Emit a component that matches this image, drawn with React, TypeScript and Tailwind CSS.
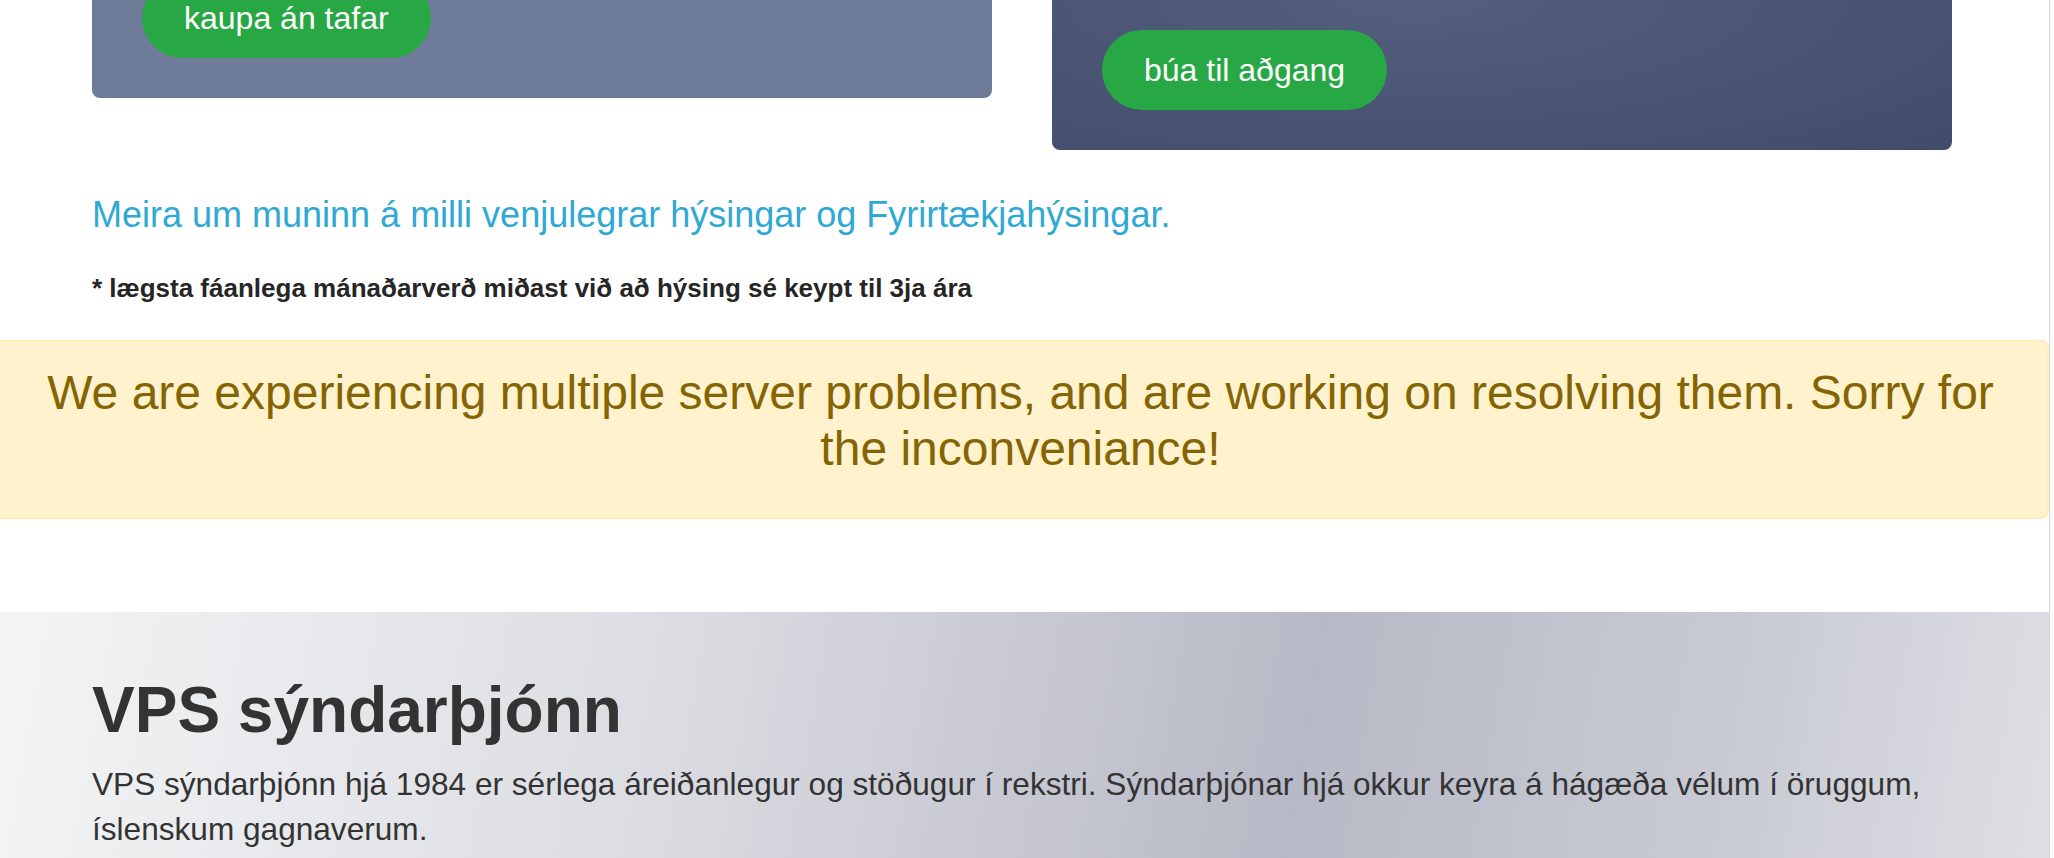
const font = "font-['Liberation_Sans',Arial,sans-serif]";

function GreenButton({ text, className = "" }: { text: string; className?: string }) {
  return (
    <button
      className={`flex h-[80px] items-center rounded-full bg-[#28a745] px-[42px] text-[32px] text-white ${className}`}
    >
      {text}
    </button>
  );
}

export default function App() {
  return (
    <div className={`flex min-h-[858px] w-full overflow-hidden bg-white ${font}`}>
      <main className="flex-1 overflow-hidden">
        <div className="ml-[92px] w-[1860px]">
          <div className="grid grid-cols-2 items-start gap-[60px]">
            <div className="rounded-b-lg bg-[#6f7c99] pb-[40px] pl-[50px]">
              <GreenButton text="kaupa án tafar" className="-mt-[22px]" />
            </div>
            <div className="rounded-b-lg bg-[radial-gradient(ellipse_at_40%_0%,#545f7e,#414c6b)] pb-[40px] pl-[50px] pt-[30px]">
              <GreenButton text="búa til aðgang" />
            </div>
          </div>

          <a href="#" className="mt-[38px] block text-[36px] leading-[54px] text-[#2fa9d4]">
            Meira um muninn á milli venjulegrar hýsingar og Fyrirtækjahýsingar.
          </a>
          <p className="mt-[27px] text-[26px] font-bold leading-[39px] text-[#262626]">
            * lægsta fáanlega mánaðarverð miðast við að hýsing sé keypt til 3ja ára
          </p>
        </div>

        <div className="-ml-[8px] mt-[32px] rounded-r-lg border-2 border-[#ffeeba] bg-[#fff2cc] px-[40px] pb-[24px] pt-[23px]">
          <h4 className="mb-[16px] text-center text-[48px] leading-[56px] text-[#856404]">
            We are experiencing multiple server problems, and are working on resolving them. Sorry for
            the inconveniance!
          </h4>
        </div>

        <section className="mt-[93px] bg-[linear-gradient(100deg,#f3f4f5_0%,#dcdde2_32%,#b7b9c6_63%,#c8cad3_83%,#dfe0e5_100%)] pb-[80px] pt-[60px]">
          <div className="ml-[92px] w-[1860px] text-[#333]">
            <h2 className="mb-[13px] text-[64px] font-bold leading-[77px]">VPS sýndarþjónn</h2>
            <p className="text-[31.6px] leading-[45px]">
              VPS sýndarþjónn hjá 1984 er sérlega áreiðanlegur og stöðugur í rekstri. Sýndarþjónar hjá
              okkur keyra á hágæða vélum í öruggum, íslenskum gagnaverum.
            </p>
          </div>
        </section>
      </main>
      <aside className="w-[5px] shrink-0 border-l border-[#d6d6d6] bg-[#fafafa]" />
    </div>
  );
}
